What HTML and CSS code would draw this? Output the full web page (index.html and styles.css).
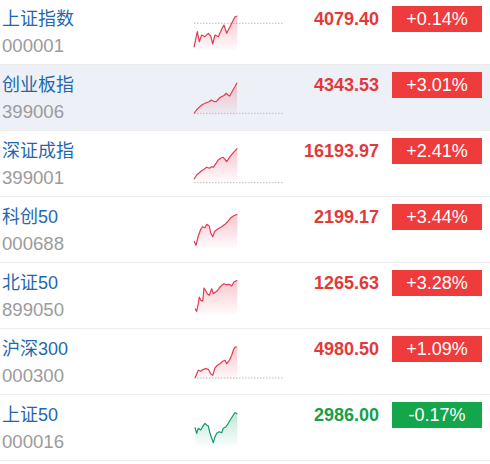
FILE: index.html
```html
<!DOCTYPE html>
<html lang="zh">
<head>
<meta charset="utf-8">
<link rel="stylesheet" href="styles.css">
</head>
<body>
<div class="list">
  <div class="row">
    <div class="name"><div class="title">上证指数</div><div class="code">000001</div></div>
    <svg class="chart" width="90" height="42" viewBox="0 0 90 42">
      <defs><linearGradient id="g1" x1="0" y1="0" x2="0" y2="1"><stop offset="0" stop-color="#e8405a" stop-opacity="0.3"/><stop offset="1" stop-color="#e8405a" stop-opacity="0.02"/></linearGradient></defs>
      <line class="base" x1="0" y1="10.3" x2="90" y2="10.3"/>
      <polygon fill="url(#g1)" points="0,34.3 3.3,18.7 5.3,28.7 7.7,22 11,23.7 14.3,20.3 16.7,23 18.7,31 21,22 24.3,23.7 27.7,16.3 30,12 32.7,20.3 36,13.7 39.3,7 41,3.7 43.3,3 43.3,37 0,37"/>
      <polyline class="up" points="0,34.3 3.3,18.7 5.3,28.7 7.7,22 11,23.7 14.3,20.3 16.7,23 18.7,31 21,22 24.3,23.7 27.7,16.3 30,12 32.7,20.3 36,13.7 39.3,7 41,3.7 43.3,3"/>
    </svg>
    <div class="price up-text">4079.40</div>
    <div class="badge up-bg">+0.14%</div>
  </div>
  <div class="row active">
    <div class="name"><div class="title">创业板指</div><div class="code">399006</div></div>
    <svg class="chart" width="90" height="42" viewBox="0 0 90 42">
      <defs><linearGradient id="g2" x1="0" y1="0" x2="0" y2="1"><stop offset="0" stop-color="#e8405a" stop-opacity="0.3"/><stop offset="1" stop-color="#e8405a" stop-opacity="0.02"/></linearGradient></defs>
      <line class="base" x1="0" y1="34.3" x2="90" y2="34.3"/>
      <polygon fill="url(#g2)" points="0,34.3 2.5,31 5.7,27.7 8.5,25.5 12.3,23.7 15,22.8 17.3,21 20,22.5 22.3,22.7 25,19.5 27.3,17.7 30,16.5 32.3,14.3 34,16 35.7,17 39,11 41,7.5 43,3.7 43,37 0,37"/>
      <polyline class="up" points="0,34.3 2.5,31 5.7,27.7 8.5,25.5 12.3,23.7 15,22.8 17.3,21 20,22.5 22.3,22.7 25,19.5 27.3,17.7 30,16.5 32.3,14.3 34,16 35.7,17 39,11 41,7.5 43,3.7"/>
    </svg>
    <div class="price up-text">4343.53</div>
    <div class="badge up-bg">+3.01%</div>
  </div>
  <div class="row">
    <div class="name"><div class="title">深证成指</div><div class="code">399001</div></div>
    <svg class="chart" width="90" height="42" viewBox="0 0 90 42">
      <defs><linearGradient id="g3" x1="0" y1="0" x2="0" y2="1"><stop offset="0" stop-color="#e8405a" stop-opacity="0.3"/><stop offset="1" stop-color="#e8405a" stop-opacity="0.02"/></linearGradient></defs>
      <line class="base" x1="0" y1="37.7" x2="90" y2="37.7"/>
      <polygon fill="url(#g3)" points="0,34.3 2.7,30 5.3,27.7 7.7,25.7 10,24.3 12.7,22.3 15.3,23.3 17.7,21.7 19.3,22.3 22,18.3 24.3,15 26.7,13.3 29.3,12.3 31,14.3 32.7,16.7 36,11.7 39.3,7.7 43.3,3.3 43.3,37 0,37"/>
      <polyline class="up" points="0,34.3 2.7,30 5.3,27.7 7.7,25.7 10,24.3 12.7,22.3 15.3,23.3 17.7,21.7 19.3,22.3 22,18.3 24.3,15 26.7,13.3 29.3,12.3 31,14.3 32.7,16.7 36,11.7 39.3,7.7 43.3,3.3"/>
    </svg>
    <div class="price up-text">16193.97</div>
    <div class="badge up-bg">+2.41%</div>
  </div>
  <div class="row">
    <div class="name"><div class="title">科创50</div><div class="code">000688</div></div>
    <svg class="chart" width="90" height="42" viewBox="0 0 90 42">
      <defs><linearGradient id="g4" x1="0" y1="0" x2="0" y2="1"><stop offset="0" stop-color="#e8405a" stop-opacity="0.3"/><stop offset="1" stop-color="#e8405a" stop-opacity="0.02"/></linearGradient></defs>
      <polygon fill="url(#g4)" points="0,30 2,34.3 4.3,25 6.7,18.3 8.7,15.7 11,16.7 12.7,13.3 15.3,15 16.7,21.7 18.7,25.7 21,20 24.3,17.7 27.7,15.7 31,13.3 34.3,10 36.7,6.7 39.3,5 43.3,3.3 43.3,37 0,37"/>
      <polyline class="up" points="0,30 2,34.3 4.3,25 6.7,18.3 8.7,15.7 11,16.7 12.7,13.3 15.3,15 16.7,21.7 18.7,25.7 21,20 24.3,17.7 27.7,15.7 31,13.3 34.3,10 36.7,6.7 39.3,5 43.3,3.3"/>
    </svg>
    <div class="price up-text">2199.17</div>
    <div class="badge up-bg">+3.44%</div>
  </div>
  <div class="row">
    <div class="name"><div class="title">北证50</div><div class="code">899050</div></div>
    <svg class="chart" width="90" height="42" viewBox="0 0 90 42">
      <defs><linearGradient id="g5" x1="0" y1="0" x2="0" y2="1"><stop offset="0" stop-color="#e8405a" stop-opacity="0.3"/><stop offset="1" stop-color="#e8405a" stop-opacity="0.02"/></linearGradient></defs>
      <polygon fill="url(#g5)" points="1,31.7 2.7,34.3 4.3,26.7 5.3,20 6.7,23.3 8.7,24.3 10,11 12,14.3 13.3,16.7 15.3,18.3 17.7,11.7 19.3,16.7 22.7,14.3 25.3,11 27.7,8.3 30,6.7 32.7,7.7 35.3,7.3 37.7,9 40,5 43.3,3.3 43.3,37 1,37"/>
      <polyline class="up" points="1,31.7 2.7,34.3 4.3,26.7 5.3,20 6.7,23.3 8.7,24.3 10,11 12,14.3 13.3,16.7 15.3,18.3 17.7,11.7 19.3,16.7 22.7,14.3 25.3,11 27.7,8.3 30,6.7 32.7,7.7 35.3,7.3 37.7,9 40,5 43.3,3.3"/>
    </svg>
    <div class="price up-text">1265.63</div>
    <div class="badge up-bg">+3.28%</div>
  </div>
  <div class="row">
    <div class="name"><div class="title">沪深300</div><div class="code">000300</div></div>
    <svg class="chart" width="90" height="42" viewBox="0 0 90 42">
      <defs><linearGradient id="g6" x1="0" y1="0" x2="0" y2="1"><stop offset="0" stop-color="#e8405a" stop-opacity="0.3"/><stop offset="1" stop-color="#e8405a" stop-opacity="0.02"/></linearGradient></defs>
      <line class="base" x1="0" y1="35" x2="90" y2="35"/>
      <polygon fill="url(#g6)" points="1,35 4.3,27.3 6.7,28.3 9.3,26.3 12,25.7 14.3,26.3 16.7,30.7 18.7,32.3 21,25 23.3,22.3 26,20.7 28.7,18.3 31,17.3 32.7,20.7 35.3,17.3 37.7,12.3 39.3,7.3 41,4 43.3,4 43.3,37 1,37"/>
      <polyline class="up" points="1,35 4.3,27.3 6.7,28.3 9.3,26.3 12,25.7 14.3,26.3 16.7,30.7 18.7,32.3 21,25 23.3,22.3 26,20.7 28.7,18.3 31,17.3 32.7,20.7 35.3,17.3 37.7,12.3 39.3,7.3 41,4 43.3,4"/>
    </svg>
    <div class="price up-text">4980.50</div>
    <div class="badge up-bg">+1.09%</div>
  </div>
  <div class="row">
    <div class="name"><div class="title">上证50</div><div class="code">000016</div></div>
    <svg class="chart" width="90" height="42" viewBox="0 0 90 42">
      <defs><linearGradient id="g7" x1="0" y1="0" x2="0" y2="1"><stop offset="0" stop-color="#1aa872" stop-opacity="0.28"/><stop offset="1" stop-color="#1aa872" stop-opacity="0.02"/></linearGradient></defs>
      <polygon fill="url(#g7)" points="1,18.3 2.7,24.3 4.3,19.3 6.7,21 8.7,17.7 11,14.3 12.7,16 14.3,17 16,24.3 17.7,29.3 19.3,33.7 21,27.7 22.7,24.3 25.3,22.7 27.7,23.7 29.3,19.3 32,17.7 34.3,14.3 36.7,10.3 39.3,6 41,3.7 43.3,5 43.3,37 1,37"/>
      <polyline class="down" points="1,18.3 2.7,24.3 4.3,19.3 6.7,21 8.7,17.7 11,14.3 12.7,16 14.3,17 16,24.3 17.7,29.3 19.3,33.7 21,27.7 22.7,24.3 25.3,22.7 27.7,23.7 29.3,19.3 32,17.7 34.3,14.3 36.7,10.3 39.3,6 41,3.7 43.3,5"/>
    </svg>
    <div class="price down-text">2986.00</div>
    <div class="badge down-bg">-0.17%</div>
  </div>
</div>
</body>
</html>
```

FILE: styles.css
```css
html, body {
  margin: 0;
  padding: 0;
  background: #ffffff;
}
body {
  width: 490px;
  height: 464px;
  overflow: hidden;
  font-family: "Liberation Sans", "Noto Sans CJK SC", sans-serif;
}
.list {
  margin-top: -1px;
}
.row {
  display: grid;
  grid-template-columns: 192px 90px 1fr 90px;
  align-items: start;
  padding: 7px 8px 0 2px;
  box-sizing: content-box;
  border-bottom: 1px solid #ececec;
  height: 58px;
}
.row.active {
  background: #edf1f7;
}
.name {
  display: flex;
  flex-direction: column;
  gap: 2px;
}
.title {
  font-size: 18px;
  line-height: 26px;
  color: #1f68ad;
}
.code {
  font-size: 18.6px;
  line-height: 24px;
  color: #9b9b9b;
}
.chart {
  display: block;
  margin-top: 7px;
  overflow: visible;
}
.chart .base {
  stroke: #bdbdbd;
  stroke-width: 1;
  stroke-dasharray: 1.5 1.5;
}
.chart polyline {
  fill: none;
  stroke-width: 1.2;
  stroke-linejoin: round;
}
.chart .up {
  stroke: #e03c55;
}
.chart .down {
  stroke: #139a68;
}
.price {
  font-size: 18px;
  font-weight: bold;
  line-height: 26px;
  text-align: right;
  padding-right: 13px;
}
.up-text {
  color: #e23a3a;
}
.down-text {
  color: #16a04a;
}
.badge {
  height: 26px;
  line-height: 26px;
  font-size: 18px;
  color: #ffffff;
  text-align: center;
}
.up-bg {
  background: #ee3b3b;
}
.down-bg {
  background: #14a64b;
}
```
